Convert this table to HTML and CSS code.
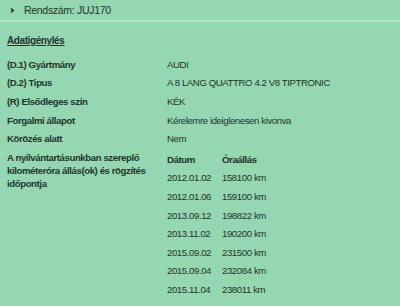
FILE: index.html
```html
<!DOCTYPE html>
<html lang="hu">
<head>
<meta charset="utf-8">
<title>Rendszám: JUJ170</title>
<link rel="stylesheet" href="styles.css">
</head>
<body>
<div class="bar">
  <svg class="chev" width="5" height="7" viewBox="0 0 5 7"><path d="M0.3 0.5 L4.6 3.5 L0.3 6.5 L1.6 3.5 Z" fill="#1e3328"/></svg>
  <span>Rendszám: JUJ170</span>
</div>
<div class="panel">
  <h2 class="title">Adatigénylés</h2>
  <div class="grid">
    <div class="label">(D.1) Gyártmány</div><div class="value">AUDI</div>
    <div class="label">(D.2) Tipus</div><div class="value">A 8 LANG QUATTRO 4.2 V8 TIPTRONIC</div>
    <div class="label">(R) Elsődleges szín</div><div class="value">KÉK</div>
    <div class="label">Forgalmi állapot</div><div class="value">Kérelemre ideiglenesen kivonva</div>
    <div class="label">Körözés alatt</div><div class="value">Nem</div>
    <div class="label multi">A nyilvántartásunkban szereplő kilométeróra állás(ok) és rögzítés időpontja</div>
    <div class="value multi">
      <div class="km">
        <div class="th">Dátum</div><div class="th">Óraállás</div>
        <div>2012.01.02</div><div>158100 km</div>
        <div>2012.01.06</div><div>159100 km</div>
        <div>2013.09.12</div><div>198822 km</div>
        <div>2013.11.02</div><div>190200 km</div>
        <div>2015.09.02</div><div>231500 km</div>
        <div>2015.09.04</div><div>232084 km</div>
        <div>2015.11.04</div><div>238011 km</div>
      </div>
    </div>
  </div>
</div>
</body>
</html>
```
FILE: styles.css
```css
html, body {
  margin: 0;
  background: #94d7b2;
}
body {
  font-family: "Liberation Sans", Arial, sans-serif;
  font-size: 9.6px;
  letter-spacing: -0.4px;
  color: #1f3529;
  width: 400px;
  height: 306px;
  overflow: hidden;
}
.bar {
  display: flex;
  align-items: center;
  height: 20px;
  padding-left: 10px;
  font-size: 10.5px;
  letter-spacing: -0.3px;
  border-bottom: 2px solid #b1e4c7;
}
.chev {
  margin-right: 9px;
}
.panel {
  padding: 0 7px;
}
.title {
  margin: 12px 0 0;
  font-size: 10px;
  font-weight: bold;
  text-decoration: underline;
  line-height: 13px;
}
.grid {
  display: grid;
  grid-template-columns: 160px 1fr;
  margin-top: 8px;
  line-height: 13px;
}
.label {
  font-weight: bold;
  padding: 2.8px 0;
}
.value {
  padding: 2.8px 0;
}
.label.multi {
  padding-top: 4.5px;
  padding-right: 6px;
  line-height: 12.6px;
}
.value.multi {
  padding: 0;
}
.km {
  display: grid;
  grid-template-columns: 55px 1fr;
  grid-template-rows: 17.6px;
  grid-auto-rows: 18.6px;
  align-items: center;
  padding-top: 3px;
}
.th {
  font-weight: bold;
}
```
